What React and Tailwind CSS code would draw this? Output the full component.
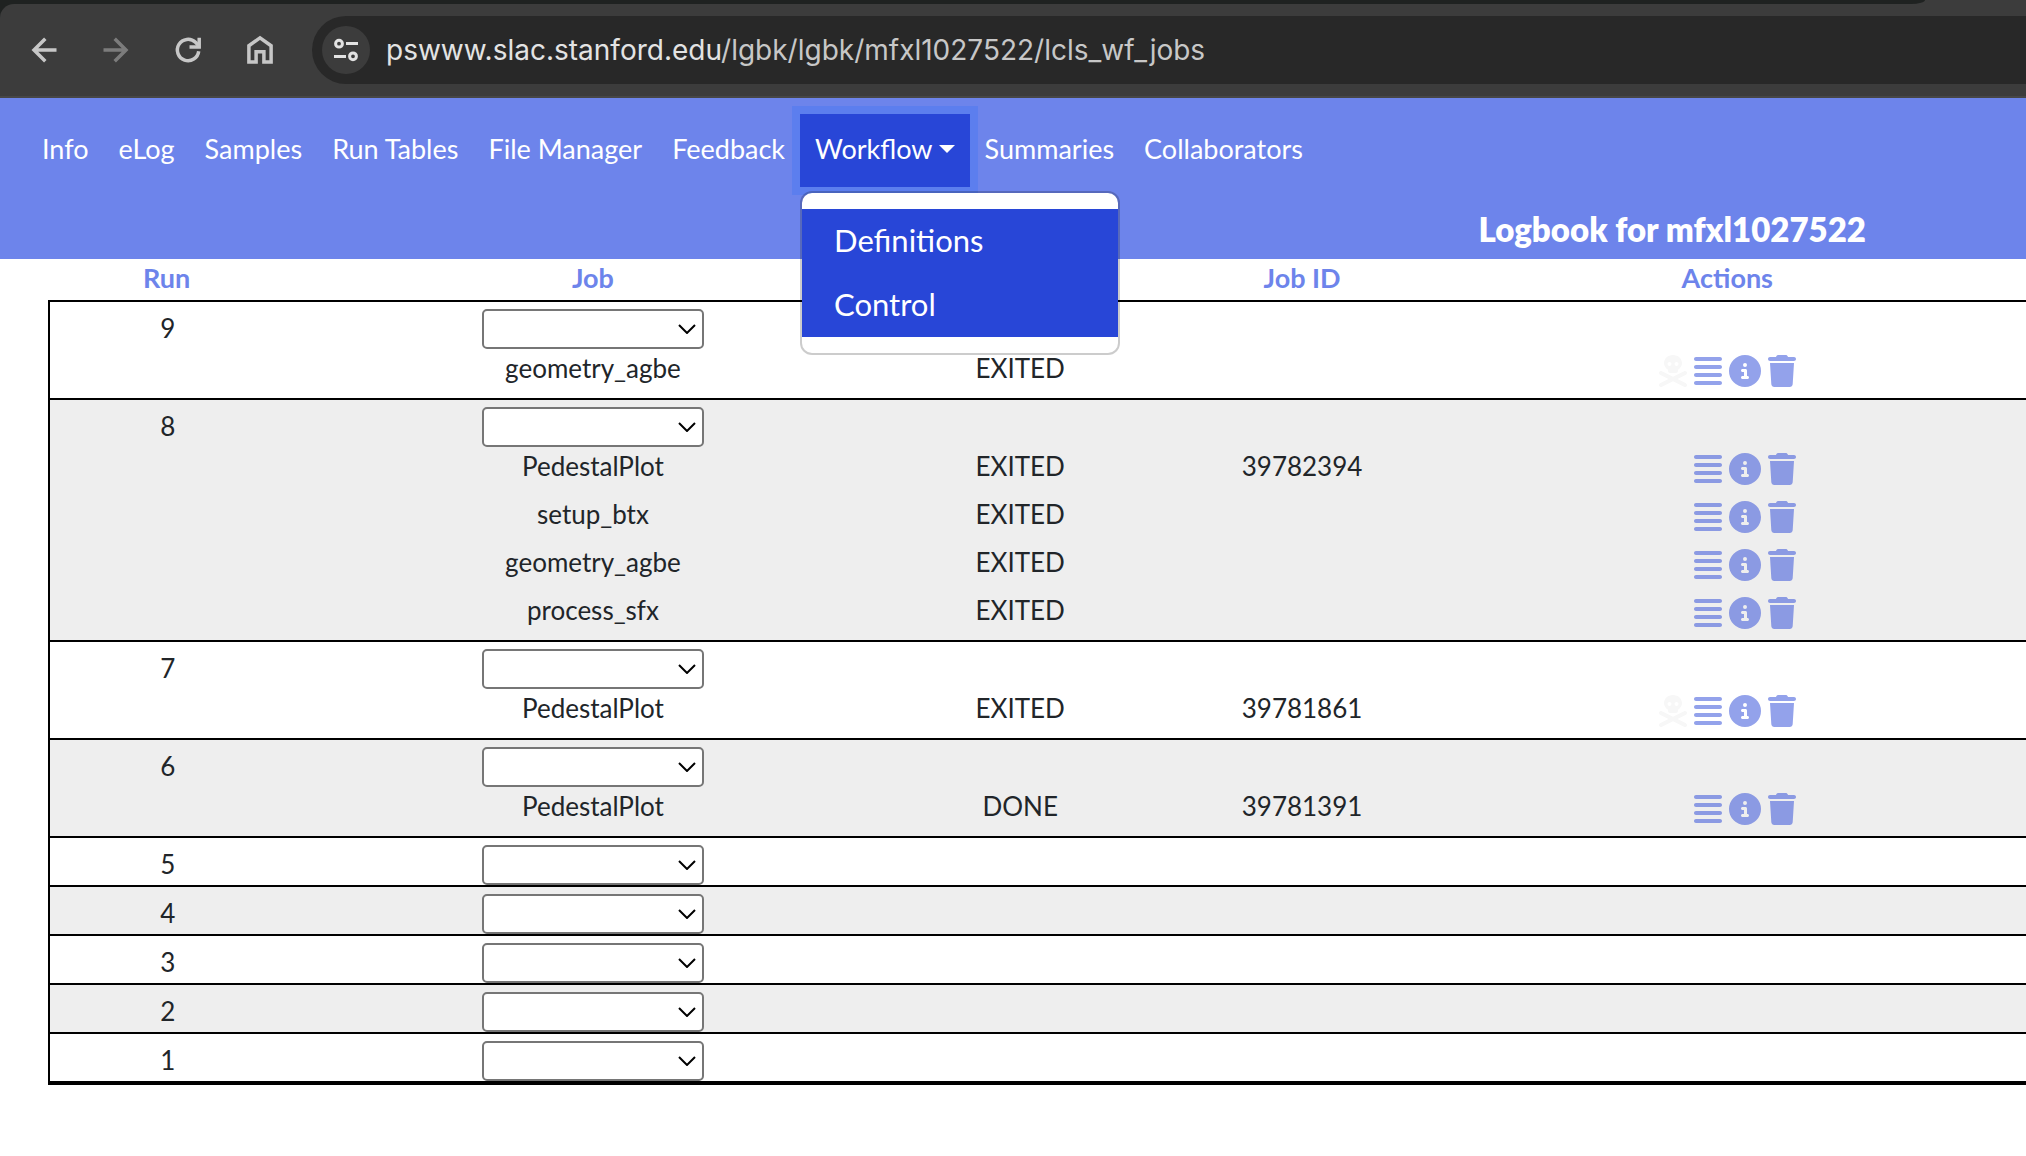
import React from "react";
import { FaAlignJustify, FaCircleInfo, FaSkullCrossbones, FaTrash } from "react-icons/fa6";

const NAV_BEFORE = ["Info", "eLog", "Samples", "Run Tables", "File Manager", "Feedback"];
const NAV_AFTER = ["Summaries", "Collaborators"];

const RUNS = [
  { run: 9, canKill: true, jobs: [{ name: "geometry_agbe", status: "EXITED" }] },
  {
    run: 8,
    jobs: [
      { name: "PedestalPlot", status: "EXITED", id: "39782394" },
      { name: "setup_btx", status: "EXITED" },
      { name: "geometry_agbe", status: "EXITED" },
      { name: "process_sfx", status: "EXITED" },
    ],
  },
  { run: 7, canKill: true, jobs: [{ name: "PedestalPlot", status: "EXITED", id: "39781861" }] },
  { run: 6, jobs: [{ name: "PedestalPlot", status: "DONE", id: "39781391" }] },
  { run: 5, jobs: [] },
  { run: 4, jobs: [] },
  { run: 3, jobs: [] },
  { run: 2, jobs: [] },
  { run: 1, jobs: [] },
];

function ToolbarButton({ label, color = "text-[#c7c7c7]", children }) {
  return (
    <button type="button" aria-label={label} className={`size-8 ${color}`}>
      <svg viewBox="0 0 32 32" className="size-8" fill="none" stroke="currentColor" strokeWidth="3.5">
        {children}
      </svg>
    </button>
  );
}

function BrowserBar() {
  return (
    <div className="bg-[#1f2221]">
      <div className="h-1 bg-[#3c3c3c]">
        <div className="h-1 w-[95%] rounded-br-[14px_4px] bg-[#1f2221]" />
      </div>
      <div className="flex items-center rounded-tl-[14px] border-b-2 border-[#474747] bg-[#3c3c3c] py-3 pl-7">
        <div className="flex gap-10">
          <ToolbarButton label="Back">
            <path d="M28.500 16H6M17.300 4.800L6 16l11.300 11.200" />
          </ToolbarButton>
          <ToolbarButton label="Forward" color="text-[#7c7c7c]">
            <path d="M3.500 16H26M14.700 4.800L26 16 14.700 27.200" />
          </ToolbarButton>
          <ToolbarButton label="Reload">
            <path d="M26.700 17.300A10.700 10.700 0 1 1 23.500 8.300L26.500 11.500" />
            <path d="M27.200 3.800V13H17.500" />
          </ToolbarButton>
          <ToolbarButton label="Home">
            <path d="M4.900 28.100V11.700L16 3.800l11.100 7.900v16.400h-7.200V17.800h-7.800v10.300z" />
          </ToolbarButton>
        </div>
        <div className="ml-9 flex h-[68px] flex-1 items-center gap-4 rounded-l-full bg-[#282828] pl-[10px]">
          <button
            type="button"
            aria-label="View site information"
            className="grid size-12 place-items-center rounded-full bg-[#3c3c3c] text-[#e3e3e3]"
          >
            <svg viewBox="0 0 24 24" className="size-6" fill="none" stroke="currentColor" strokeWidth="3">
              <circle cx="5" cy="5.700" r="3.400" />
              <path d="M12 5.500h12M0 18.500h12" />
              <circle cx="19" cy="18.300" r="3.400" />
            </svg>
          </button>
          <div role="textbox" aria-label="Address" className="font-['Inter',sans-serif] text-[28px] text-[#c7c7c7]">
            <span className="text-[#e3e3e3]">pswww.slac.stanford.edu</span>/lgbk/lgbk/mfxl1027522/lcls_wf_jobs
          </div>
        </div>
      </div>
    </div>
  );
}

function NavLink({ children }) {
  return (
    <a href="#" className="flex h-[73px] items-center px-[15px] pb-[3px]">
      {children}
    </a>
  );
}

function Header() {
  return (
    <header className="bg-[#6d84eb] pt-4 pb-[6px] text-white">
      <nav className="flex px-[27px]">
        {NAV_BEFORE.map((item) => (
          <NavLink key={item}>{item}</NavLink>
        ))}
        <div className="relative">
          <button
            type="button"
            aria-expanded="true"
            className="flex h-[73px] items-center gap-[6px] bg-[#2846d7] px-[15px] pb-[3px] ring-8 ring-[#5c7eee]"
          >
            Workflow
            <span className="border-x-8 border-t-8 border-x-transparent border-t-white" />
          </button>
          <div className="absolute top-full left-0 z-10 mt-1 w-80 rounded-xl border-2 border-black/20 bg-white bg-clip-padding py-4 text-[31px]">
            {["Definitions", "Control"].map((item) => (
              <a key={item} href="#" className="flex h-16 items-center bg-[#2846d7] px-8 pb-[3px]">
                {item}
              </a>
            ))}
          </div>
        </div>
        {NAV_AFTER.map((item) => (
          <NavLink key={item}>{item}</NavLink>
        ))}
      </nav>
      <h1 className="mt-[18px] pr-40 text-right text-[33px] leading-12 font-extrabold">Logbook for mfxl1027522</h1>
    </header>
  );
}

function JobSelect({ run }) {
  return (
    <div className="relative mx-auto w-[222px]">
      <select
        aria-label={`New job for run ${run}`}
        className="block h-10 w-full appearance-none rounded-[5px] border-2 border-[#767676] bg-white"
      />
      <svg
        viewBox="0 0 18 10"
        className="pointer-events-none absolute top-[15px] right-2 h-[10px] w-[18px]"
        fill="none"
        stroke="#000"
        strokeWidth="2"
      >
        <path d="M1 1l8 8 8-8" />
      </svg>
    </div>
  );
}

function ActionButton({ label, className, icon: Icon, iconClass }) {
  return (
    <button type="button" aria-label={label} className={className}>
      <Icon className={iconClass} />
    </button>
  );
}

function Actions({ canKill }) {
  return (
    <div className="flex justify-center gap-[7px] pt-[5px] text-[#2846d7]/50">
      <ActionButton
        label="Kill job"
        className={canKill ? "text-[#f7f7f7]" : "invisible"}
        icon={FaSkullCrossbones}
        iconClass="h-8 w-7"
      />
      <ActionButton label="Show log" icon={FaAlignJustify} iconClass="h-8 w-7" />
      <ActionButton label="Job details" icon={FaCircleInfo} iconClass="size-8" />
      <ActionButton label="Delete job" icon={FaTrash} iconClass="h-8 w-7" />
    </div>
  );
}

function RunGroup({ run, canKill, jobs, shaded, last }) {
  const line = "border-t-2 border-black";
  const end = last ? "border-b-4" : "";
  return (
    <tbody className={shaded ? "bg-[#eeeeee]" : "bg-white"}>
      <tr className={jobs.length ? "h-[50px]" : last ? "h-[53px]" : "h-[49px]"}>
        <td rowSpan={jobs.length + 1} className={`border-l-2 pt-2 ${line} ${end}`}>
          {run}
        </td>
        <td className={`pt-[7px] ${line} ${end}`}>
          <JobSelect run={run} />
        </td>
        <td colSpan={4} className={`${line} ${end}`} />
      </tr>
      {jobs.map((job, i) => (
        <tr key={i} className="h-12">
          <td>{job.name}</td>
          <td>{job.status}</td>
          <td>{job.id}</td>
          <td>
            <Actions canKill={canKill} />
          </td>
          <td />
        </tr>
      ))}
    </tbody>
  );
}

export default function App() {
  return (
    <div className="min-h-screen overflow-x-hidden bg-white font-['Lato',sans-serif] text-[27px] leading-9 text-[#212529]">
      <BrowserBar />
      <Header />
      <main className="pl-12">
        <table className="w-full table-fixed border-separate border-spacing-0 text-center text-[26px] [&_td]:align-top">
          <colgroup>
            <col className="w-[12%]" />
            <col className="w-[31.1%]" />
            <col className="w-[12.1%]" />
            <col className="w-[16.4%]" />
            <col className="w-[26.6%]" />
            <col />
          </colgroup>
          <thead>
            <tr className="h-[41px] align-top text-[27px] leading-[38px] text-[#6d84eb]">
              <th scope="col">Run</th>
              <th scope="col">Job</th>
              <th scope="col" aria-label="Status" />
              <th scope="col">Job ID</th>
              <th scope="col">Actions</th>
              <td />
            </tr>
          </thead>
          {RUNS.map((group, i) => (
            <RunGroup key={group.run} {...group} shaded={i % 2 === 1} last={i === RUNS.length - 1} />
          ))}
        </table>
      </main>
    </div>
  );
}
